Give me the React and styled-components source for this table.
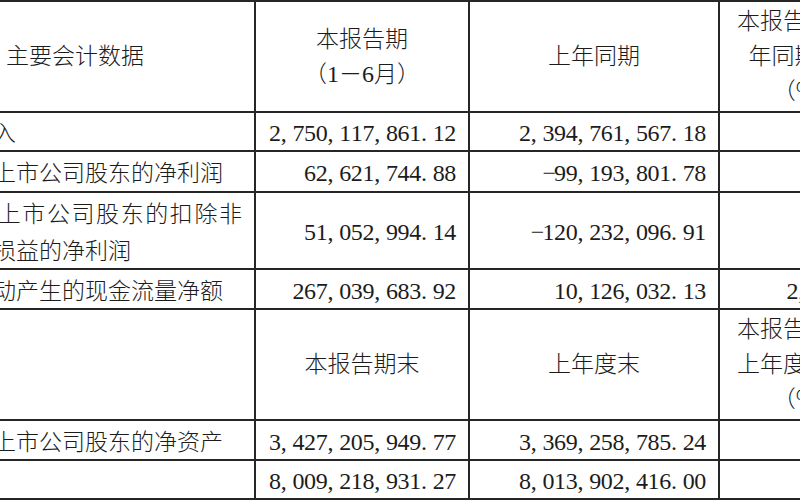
import React from 'react';
import styled, { createGlobalStyle } from 'styled-components';

const GlobalStyle = createGlobalStyle`
  html, body {
    margin: 0;
    padding: 0;
    background: #ffffff;
    overflow: hidden;
  }
`;

const Page = styled.div`
  width: 800px;
  height: 500px;
  overflow: hidden;
  background: #ffffff;
`;

const Table = styled.table`
  margin-left: -84px;
  border-collapse: collapse;
  table-layout: fixed;
  width: 976px;
  color: #1c1c1c;
  font-family: "Noto Sans CJK SC", "Noto Sans", sans-serif;
  font-weight: 300;
  font-size: 23px;
  border-top: 2px solid #262626;
`;

const Row = styled.tr`
  height: ${(p) => p.$h}px;
`;

const Cell = styled.td`
  border: 2px solid #262626;
  padding: 0 12px 0 6px;
  line-height: 37px;
  vertical-align: middle;
  text-align: ${(p) => p.$align || 'left'};
  white-space: ${(p) => (p.$nowrap ? 'nowrap' : 'normal')};
  overflow: hidden;
`;

const HeadCell = styled(Cell)`
  text-align: center;
  line-height: 35px;
  padding: 0 ${(p) => p.$padRight || 6}px 4px 6px;
`;

const Label = styled.div`
  text-align: justify;
  text-align-last: left;
`;

const Figure = styled.span`
  font-family: "Liberation Serif", "DejaVu Serif", serif;
  font-weight: 400;
  font-size: 24px;
  line-height: 1;
  white-space: nowrap;
`;

const Ch = styled.span`
  display: inline-block;
  width: 11.7px;
  text-align: left;
`;

const Num = ({ value }) => (
  <Figure>
    {value.split('').map((c, i) => (
      <Ch key={i}>{c === '-' ? '\u2212' : c}</Ch>
    ))}
  </Figure>
);

const Digit = styled.span`
  font-family: "Liberation Serif", serif;
  font-weight: 400;
  font-size: 24px;
  line-height: 1;
`;

const top = [
  { label: '营业收入', cur: '2,750,117,861.12', prev: '2,394,761,567.18', chg: '14.84', h: 39 },
  { label: '归属于上市公司股东的净利润', cur: '62,621,744.88', prev: '-99,193,801.78', chg: '163.13', h: 41 },
  { label: '归属于上市公司股东的扣除非经常性损益的净利润', cur: '51,052,994.14', prev: '-120,232,096.91', chg: '142.46', h: 77 },
  { label: '经营活动产生的现金流量净额', cur: '267,039,683.92', prev: '10,126,032.13', chg: '2,537.14', h: 40 },
];

const bottom = [
  { label: '归属于上市公司股东的净资产', cur: '3,427,205,949.77', prev: '3,369,258,785.24', chg: '1.72', h: 40 },
  { label: '总资产', cur: '8,009,218,931.27', prev: '8,013,902,416.00', chg: '-0.06', h: 38 },
];

const DataRow = ({ row }) => (
  <Row $h={row.h}>
    <Cell>
      <Label>{row.label}</Label>
    </Cell>
    <Cell $align="right" $nowrap><Num value={row.cur} /></Cell>
    <Cell $align="right" $nowrap><Num value={row.prev} /></Cell>
    <Cell $align="right" $nowrap><Num value={row.chg} /></Cell>
  </Row>
);

export default function App() {
  return (
    <Page>
      <GlobalStyle />
      <Table>
        <colgroup>
          <col style={{ width: 338 }} />
          <col style={{ width: 214 }} />
          <col style={{ width: 250 }} />
          <col style={{ width: 174 }} />
        </colgroup>
        <tbody>
          <Row $h={111}>
            <HeadCell $padRight={28}>主要会计数据</HeadCell>
            <HeadCell>
              本报告期
              <br />
              （<Digit>1</Digit>－<Digit>6</Digit>月）
            </HeadCell>
            <HeadCell>上年同期</HeadCell>
            <HeadCell>
              本报告期比上
              <br />
              年同期增减
              <br />
              （%）
            </HeadCell>
          </Row>
          {top.map((row) => (
            <DataRow key={row.label} row={row} />
          ))}
          <Row $h={111}>
            <HeadCell />
            <HeadCell>本报告期末</HeadCell>
            <HeadCell>上年度末</HeadCell>
            <HeadCell>
              本报告期末比
              <br />
              上年度末增减
              <br />
              （%）
            </HeadCell>
          </Row>
          {bottom.map((row) => (
            <DataRow key={row.label} row={row} />
          ))}
        </tbody>
      </Table>
    </Page>
  );
}
